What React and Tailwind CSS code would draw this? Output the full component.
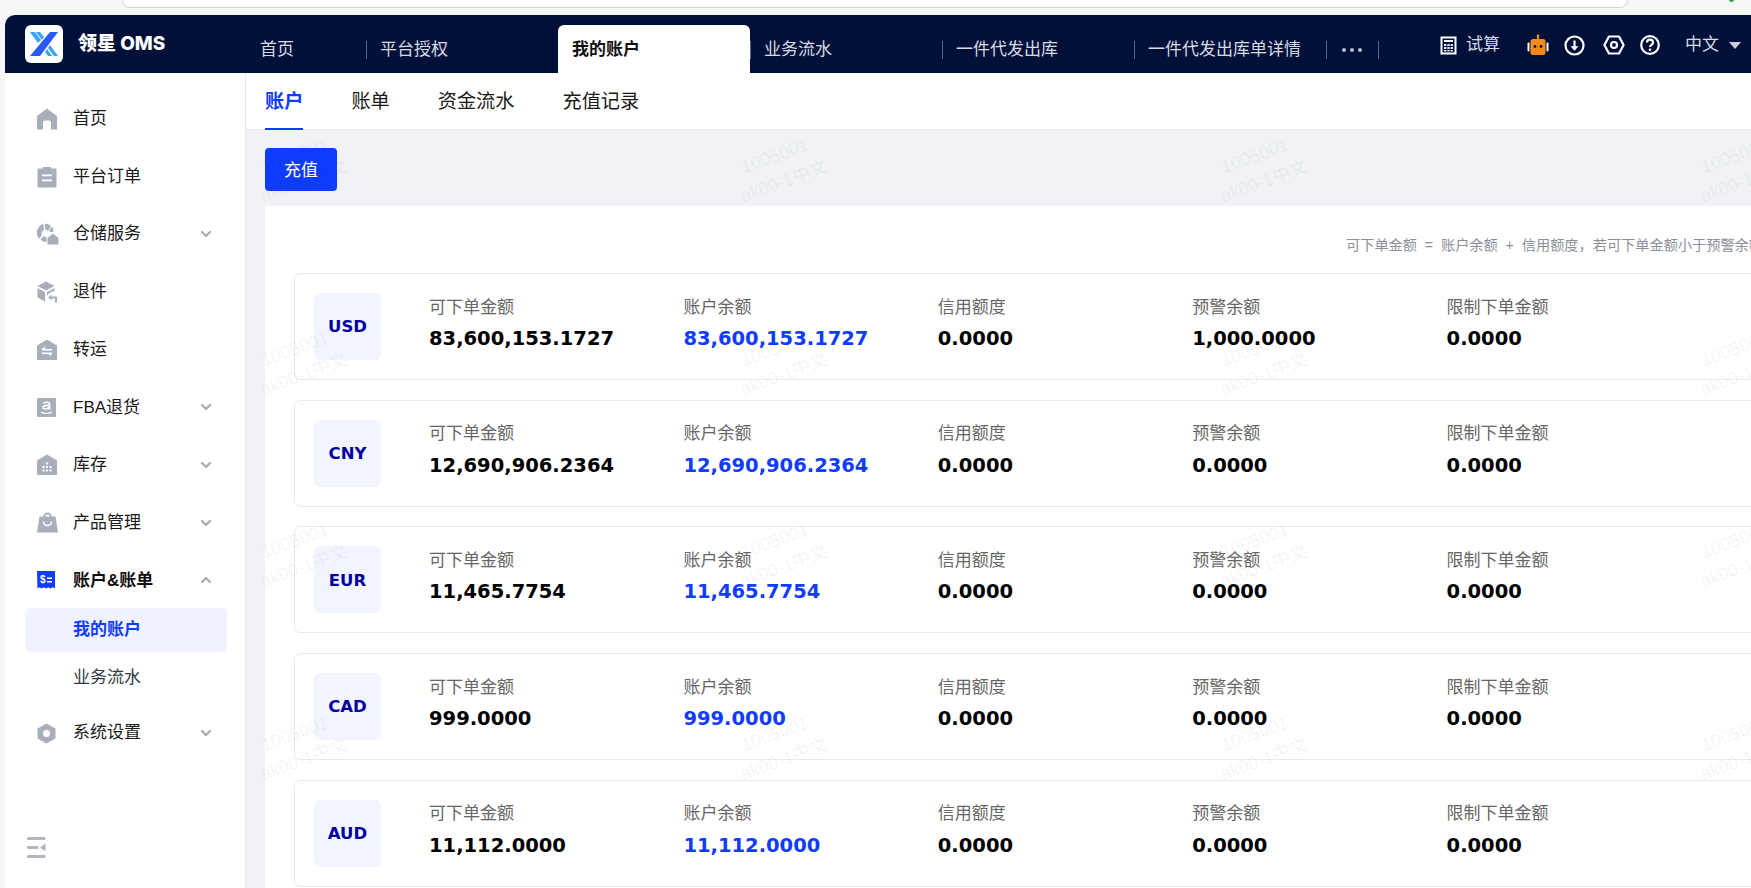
import React from "react";
import { ChevronDown, ChevronUp } from "lucide-react";

const SANS = "font-['Liberation_Sans','Noto_Sans_CJK_SC',sans-serif]";
const NUM = "font-['DejaVu_Sans','Noto_Sans_CJK_SC',sans-serif]";

const Logo = () => (
  <div className="w-[38px] h-[38px] bg-white rounded-[6px] shrink-0 flex items-center justify-center">
    <svg width="30" height="26" viewBox="0 0 30 26">
      <path d="M1 1h5l6 8-3 3z" fill="#38a4ff" />
      <path d="M7 1h4l4 5-2 3z" fill="#38a4ff" />
      <path d="M21 1h8L11 25H1z" fill="#2b59f5" />
      <path d="M19 17l2-3 8 11h-4z" fill="#38a4ff" />
      <path d="M16 21l2-3 5 7h-4z" fill="#38a4ff" />
    </svg>
  </div>
);

const CalcIcon = () => (
  <svg width="17" height="19" viewBox="0 0 17 19">
    <rect x="0.5" y="0.5" width="16" height="18" fill="#fff" />
    <rect x="2.5" y="2.5" width="12" height="14" fill="#011039" />
    <rect x="4" y="4" width="9" height="2" fill="#fff" />
    <path d="M4 8h2.4v2H4zM7.3 8h2.4v2H7.3zM10.6 8H13v2h-2.4zM4 11h2.4v2H4zM7.3 11h2.4v2H7.3zM10.6 11H13v2h-2.4zM4 14h2.4v1.5H4zM7.3 14h2.4v1.5H7.3zM10.6 14H13v1.5h-2.4z" fill="#dfe6ff" />
  </svg>
);

const RobotIcon = () => (
  <svg width="22" height="22" viewBox="0 0 22 22">
    <rect x="10" y="1.5" width="2" height="4" fill="#f5891a" />
    <circle cx="11" cy="1.8" r="1.4" fill="#f5891a" />
    <rect x="3.5" y="5" width="15" height="16" rx="2.5" fill="#f5891a" />
    <rect x="0.5" y="8.5" width="2" height="9" rx="1" fill="#fff" />
    <rect x="19.5" y="8.5" width="2" height="9" rx="1" fill="#fff" />
    <circle cx="8" cy="12.5" r="1.4" fill="#011039" />
    <circle cx="14" cy="12.5" r="1.4" fill="#011039" />
  </svg>
);

const DownloadIcon = () => (
  <svg width="21" height="21" viewBox="0 0 21 21" fill="none">
    <circle cx="10.5" cy="10.5" r="9" stroke="#fff" strokeWidth="2.2" />
    <path d="M10.5 5.5v8" stroke="#fff" strokeWidth="2.2" />
    <path d="M6.5 11.2h8l-4 4.6z" fill="#fff" />
  </svg>
);

const HexIcon = () => (
  <svg width="22" height="20" viewBox="0 0 22 20" fill="none">
    <path d="M6 1.5h10l4.6 8.5-4.6 8.5H6L1.4 10z" stroke="#fff" strokeWidth="2.2" strokeLinejoin="round" />
    <circle cx="11" cy="10" r="3" stroke="#fff" strokeWidth="2.2" />
  </svg>
);

const HelpIcon = () => (
  <svg width="20" height="20" viewBox="0 0 20 20" fill="none">
    <circle cx="10" cy="10" r="8.8" stroke="#fff" strokeWidth="2.2" />
    <path d="M7 7.6c0-1.8 1.3-3 3-3s3 1.2 3 2.8c0 2.4-3 2.4-3 4.6" stroke="#fff" strokeWidth="2.2" />
    <circle cx="10" cy="14.8" r="1.3" fill="#fff" />
  </svg>
);

const G = "#a8afbb";

const HomeIcon = () => (
  <svg width="20" height="22" viewBox="0 0 20 22">
    <path d="M10 0.5L20 8v13.5h-6v-7a2 2 0 0 0-2-2H8a2 2 0 0 0-2 2v7H0V8z" fill={G} />
  </svg>
);
const OrderIcon = () => (
  <svg width="20" height="22" viewBox="0 0 20 22">
    <path d="M1.5 2.5H6V1h8v1.500h4.500a1 1 0 0 1 1 1V20.500a1 1 0 0 1-1 1h-17a1 1 0 0 1-1-1V3.500a1 1 0 0 1 1-1z" fill={G} />
    <path d="M5 8.500h10v1.700H5zM5 13.500h10v1.700H5z" fill="#fff" />
  </svg>
);
const StoreIcon = () => (
  <svg width="22" height="22" viewBox="0 0 22 22">
    <path d="M8 0.500a8.500 8.500 0 0 1 6 2.500l-3 5a4 4 0 0 0-3-1.500z" fill={G} />
    <path d="M6.500 1L7 7a4 4 0 0 0-2 5.500l-3 3A9 9 0 0 1 6.500 1z" fill={G} />
    <path d="M15 3.500a8.500 8.500 0 0 1 1.500 5.500h-3.500a5 5 0 0 0-1-1.500z" fill={G} />
    <path d="M3.500 16.500l3-3.500a4 4 0 0 0 3 1v5a8 8 0 0 1-6-2.500z" fill={G} />
    <path d="M16 10.500l5.500 4.500v6.500h-11V15z" fill={G} />
  </svg>
);
const ReturnIcon = () => (
  <svg width="22" height="22" viewBox="0 0 22 22">
    <path d="M9 0.500L17.500 5 9 9.500 0.500 5z" fill={G} />
    <path d="M0.500 7L8 11v9.500L0.500 16.500z" fill={G} />
    <path d="M10 11l7.500-4v3.500h-3l-4.500 4z" fill={G} />
    <path d="M11 16.500l3.500-3v2h5.500v6h-2v-4h-3.500v2z" fill={G} />
  </svg>
);
const TransferIcon = () => (
  <svg width="20" height="21" viewBox="0 0 20 21">
    <path d="M10 0.500L20 6.500v14.500H0V6.500z" fill={G} />
    <path d="M5 10h10v1.400H5zM8 7.500L4.500 10H8zM5 13.500h10v1.400H5zM12 17l3.500-2H12z" fill="#fff" />
  </svg>
);
const AmazonIcon = () => (
  <svg width="19" height="19" viewBox="0 0 19 19">
    <rect width="19" height="19" rx="1" fill={G} />
    <path d="M6.500 5.500c.5-1.500 5-2 6 0v6M12.500 7.500c-3-.5-6.500 .2-6.500 2 0 2 5 2 6.500-.5" fill="none" stroke="#fff" strokeWidth="1.600" />
    <path d="M4 14c3 2 8 2 11 0" fill="none" stroke="#fff" strokeWidth="1.100" />
  </svg>
);
const StockIcon = () => (
  <svg width="20" height="21" viewBox="0 0 20 21">
    <path d="M10 0.500L20 6.500v14.500H0V6.500z" fill={G} />
    <path d="M9 8.500h2v2H9zM5.500 12h2v2h-2zM9 12h2v2H9zM12.500 12h2v2h-2zM5.500 15.500h2v2h-2zM9 15.500h2v2H9zM12.500 15.500h2v2h-2z" fill="#fff" />
  </svg>
);
const BagIcon = () => (
  <svg width="21" height="21" viewBox="0 0 21 21">
    <path d="M7 5a3.500 3.500 0 0 1 7 0" fill="none" stroke={G} strokeWidth="1.800" />
    <path d="M2.500 4.500h16L21 20.500H0z" fill={G} />
    <path d="M6.500 9.500a4 4 0 0 0 8 0" fill="none" stroke="#fff" strokeWidth="1.600" />
  </svg>
);
const BillIcon = () => (
  <svg width="18" height="19" viewBox="0 0 18 19">
    <path d="M0 0h18v17.500l-2-1.200-2.500 1.200-2-1.200-2.500 1.200-2-1.200-2.500 1.200-2-1.200-2 1.200z" fill="#0f3cff" />
    <text x="3" y="12" fontSize="10" fontWeight="700" fill="#fff" fontFamily="Liberation Sans">$</text>
    <path d="M10 6.500h5v1.500h-5zM10 10h5v1.500h-5z" fill="#fff" />
  </svg>
);
const NutIcon = () => (
  <svg width="19" height="21" viewBox="0 0 19 21">
    <path d="M9.500 0.500L18.500 5.500v10l-9 5-9-5v-10z" fill={G} />
    <circle cx="9.500" cy="10.500" r="3.500" fill="#fff" />
  </svg>
);

const menu = [
  { label: "首页", Icon: HomeIcon },
  { label: "平台订单", Icon: OrderIcon },
  { label: "仓储服务", Icon: StoreIcon, arrow: true },
  { label: "退件", Icon: ReturnIcon },
  { label: "转运", Icon: TransferIcon },
  { label: "FBA退货", Icon: AmazonIcon, arrow: true },
  { label: "库存", Icon: StockIcon, arrow: true },
  { label: "产品管理", Icon: BagIcon, arrow: true },
];

const accounts = [
  { code: "USD", available: "83,600,153.1727", balance: "83,600,153.1727", warn: "1,000.0000" },
  { code: "CNY", available: "12,690,906.2364", balance: "12,690,906.2364", warn: "0.0000" },
  { code: "EUR", available: "11,465.7754", balance: "11,465.7754", warn: "0.0000" },
  { code: "CAD", available: "999.0000", balance: "999.0000", warn: "0.0000" },
  { code: "AUD", available: "11,112.0000", balance: "11,112.0000", warn: "0.0000" },
];

const MenuRow = ({ label, Icon, arrow }) => (
  <div className="h-[57.7px] flex items-center pl-[32px] pr-[31px]">
    <div className="w-[36px] shrink-0 flex items-center"><Icon /></div>
    <span className="flex-1 text-[17px] text-[#1a1a1a]">{label}</span>
    {arrow && <ChevronDown size={16} strokeWidth={3.5} className="text-[#a8afbb]" />}
  </div>
);

const Sidebar = () => (
  <aside className="w-[241px] shrink-0 bg-white border-r border-[#e6e8ec] flex flex-col pt-[17px] relative">
    {menu.map((m) => <MenuRow key={m.label} {...m} />)}
    <div className="h-[57.7px] flex items-center pl-[32px] pr-[31px]">
      <div className="w-[36px] shrink-0 flex items-center"><BillIcon /></div>
      <span className="flex-1 text-[17px] font-bold text-[#111]">账户&账单</span>
      <ChevronUp size={16} strokeWidth={3.5} className="text-[#a8afbb]" />
    </div>
    <div className="mx-[20px] -mt-[1px] w-[202px] h-[44px] pl-[48px] flex items-center bg-[#f0f3ff] rounded-[6px] text-[17px] font-bold text-[#0f3cff]">我的账户</div>
    <div className="h-[49px] pl-[68px] pt-[3px] flex items-center text-[17px] text-[#333a46]">业务流水</div>
    <div className="mt-[3px]"><MenuRow label="系统设置" Icon={NutIcon} arrow /></div>
    <div className="mt-auto ml-[22px] mb-[30px]">
      <svg width="19" height="21" viewBox="0 0 19 21">
        <rect y="0" width="18.500" height="3" rx="1.200" fill="#b0b6c2" />
        <rect y="9" width="11.500" height="3" rx="1.200" fill="#b0b6c2" />
        <path d="M18.500 6.500v8l-5.500-4z" fill="#b0b6c2" />
        <rect y="18" width="18.500" height="3" rx="1.200" fill="#b0b6c2" />
      </svg>
    </div>
  </aside>
);

const TopTab = ({ label, width, active }) => (
  <div className={`h-[48px] shrink-0 flex items-center pl-[14px] pt-[2px] ${width} ${active ? "bg-white rounded-t-[6px]" : ""}`}>
    <span className={`text-[17px] whitespace-nowrap ${active ? "font-bold text-[#111]" : "text-[#d7dbe4]"}`}>{label}</span>
  </div>
);

const Sep = () => <div className="w-px h-[18px] bg-[#5a6785] shrink-0 mt-[2px] -mr-px" />;

const Header = () => (
  <header className="h-[58px] bg-[#011039] rounded-tl-[10px] flex items-end shrink-0 relative">
    <div className="w-[241px] shrink-0 h-full flex items-center pl-[20px] gap-[15px]">
      <Logo />
      <span className="text-[19px] font-extrabold text-white font-['Inter','Noto_Sans_CJK_SC',sans-serif] whitespace-nowrap">领星 OMS</span>
    </div>
    <div className="flex items-center">
      <TopTab label="首页" width="w-[120px]" />
      <Sep />
      <TopTab label="平台授权" width="w-[192px]" />
      <TopTab label="我的账户" width="w-[192px]" active />
      <Sep />
      <TopTab label="业务流水" width="w-[192px]" />
      <Sep />
      <TopTab label="一件代发出库" width="w-[192px]" />
      <Sep />
      <TopTab label="一件代发出库单详情" width="w-[192px]" />
      <Sep />
      <div className="w-[52px] h-[48px] shrink-0 flex items-center justify-center gap-[4px] pt-[2px]">
        <span className="w-[4px] h-[4px] rounded-full bg-[#b6bdcc]" />
        <span className="w-[4px] h-[4px] rounded-full bg-[#b6bdcc]" />
        <span className="w-[4px] h-[4px] rounded-full bg-[#b6bdcc]" />
      </div>
      <Sep />
    </div>
    <div className="h-full flex items-center ml-[62px] pt-[2px]">
      <CalcIcon />
      <span className="ml-[9px] w-[61px] text-[17px] text-[#d7dbe4]">试算</span>
      <RobotIcon />
      <div className="ml-[15px]"><DownloadIcon /></div>
      <div className="ml-[18px]"><HexIcon /></div>
      <div className="ml-[15px]"><HelpIcon /></div>
      <span className="ml-[25px] text-[17px] text-[#d7dbe4]">中文</span>
      <span className="ml-[10px] w-0 h-0 border-l-[6px] border-r-[6px] border-t-[7px] border-l-transparent border-r-transparent border-t-[#c9ced8]" />
    </div>
  </header>
);

const Cell = ({ label, value, blue }) => (
  <div className="flex flex-col -mt-[6.500px] -ml-px">
    <span className="text-[17px] leading-[24px] text-[#666]">{label}</span>
    <span className={`${NUM} text-[19.500px] leading-[24px] mt-[7.500px] font-bold whitespace-nowrap ${blue ? "text-[#0f3cff]" : "text-black"}`}>{value}</span>
  </div>
);

const AccountCard = ({ code, available, balance, warn }) => (
  <div className="w-[1600px] h-[107px] shrink-0 border border-[#e8eaee] rounded-[6px] flex items-center pl-[19px]">
    <div className="w-[67px] h-[67px] bg-[#f2f4ff] rounded-[6px] flex items-center justify-center shrink-0">
      <span className={`${NUM} text-[16.500px] pt-[2px] font-bold text-[#0000a0]`}>{code}</span>
    </div>
    <div className="ml-[49px] grid grid-cols-[repeat(5,254.4px)]">
      <Cell label="可下单金额" value={available} />
      <Cell label="账户余额" value={balance} blue />
      <Cell label="信用额度" value="0.0000" />
      <Cell label="预警余额" value={warn} />
      <Cell label="限制下单金额" value="0.0000" />
    </div>
  </div>
);

const Watermarks = () => (
  <div className="absolute left-[-186px] top-0 w-[1920px] grid grid-cols-[repeat(4,480px)] auto-rows-[192.500px] pointer-events-none">
    {Array.from({ length: 16 }).map((_, i) => (
      <div key={i} className="flex items-center justify-center">
        <div className="-rotate-20 text-center text-[18px] leading-[27px] text-black/[0.06] whitespace-nowrap">
          <div>1005001</div>
          <div>ak00-1中文</div>
        </div>
      </div>
    ))}
  </div>
);

const Main = () => (
  <main className="flex-1 min-w-0 bg-[#f0f2f6] relative overflow-hidden flex flex-col">
    <div className="h-[57px] bg-white border-b border-[#e6e8ec] flex pl-[19px] gap-[48px] shrink-0 text-[19.200px]">
      <div className="h-[57px] flex items-center border-b-[2px] border-[#0f3cff] font-bold text-[#0f3cff] pt-[3px]">账户</div>
      <div className="h-[57px] pb-[1px] flex items-center pt-[3px] text-[#1a1a1a]">账单</div>
      <div className="h-[57px] pb-[1px] flex items-center pt-[3px] text-[#1a1a1a]">资金流水</div>
      <div className="h-[57px] pb-[1px] flex items-center pt-[3px] text-[#1a1a1a]">充值记录</div>
    </div>
    <div className="pl-[19px] pt-[18px] pb-[15px] shrink-0">
      <button className="w-[72px] h-[43px] pt-[2px] bg-[#0f3cff] rounded-[4px] text-white text-[17px]">充值</button>
    </div>
    <div className="flex-1 ml-[19px] bg-white pl-[29px] overflow-hidden flex flex-col">
      <div className="h-[67px] shrink-0 pl-[1052px] pt-[28px] text-[14.200px] leading-[22px] text-[#8a8f99] whitespace-nowrap">
        {"可下单金额\u00a0\u00a0=\u00a0\u00a0账户余额\u00a0\u00a0+\u00a0\u00a0信用额度，若可下单金额小于预警余额，系统将发送预警通知"}
      </div>
      <div className="flex flex-col gap-[19.700px]">
        {accounts.map((a) => <AccountCard key={a.code} {...a} />)}
      </div>
    </div>
    <Watermarks />
  </main>
);

export default function App() {
  return (
    <div className={`${SANS} w-[1751px] h-[888px] bg-[#f6f6f6] overflow-hidden flex flex-col`}>
      <div className="h-[15px] shrink-0 relative">
        <div className="ml-[122px] w-[1506px] h-[8px] bg-white border-b border-l border-r border-[#d5d5d5] rounded-b-[14px]" />
        <div className="absolute left-[1729px] top-[-3px] w-[5px] h-[5px] rounded-full bg-[#2e9e3f]" />
      </div>
      <div className="flex-1 min-h-0 ml-[5px] flex flex-col">
        <Header />
        <div className="flex-1 min-h-0 flex">
          <Sidebar />
          <Main />
        </div>
      </div>
    </div>
  );
}
